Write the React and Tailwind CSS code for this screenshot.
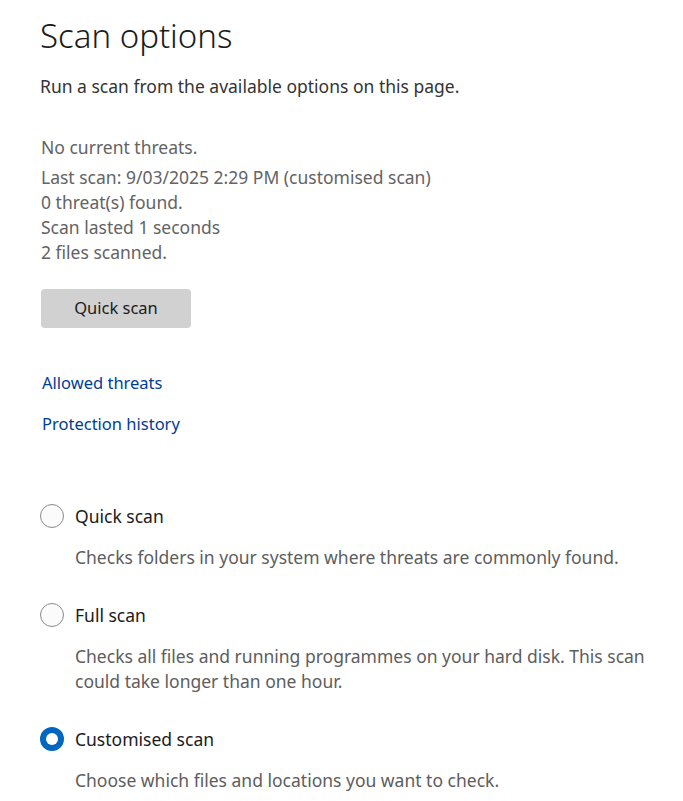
import { useState } from "react";

const statusLines = [
  "Last scan: 9/03/2025 2:29 PM (customised scan)",
  "0 threat(s) found.",
  "Scan lasted 1 seconds",
  "2 files scanned.",
];

const scanOptions = [
  {
    id: "quick",
    label: "Quick scan",
    description: "Checks folders in your system where threats are commonly found.",
  },
  {
    id: "full",
    label: "Full scan",
    description:
      "Checks all files and running programmes on your hard disk. This scan could take longer than one hour.",
  },
  {
    id: "custom",
    label: "Customised scan",
    description: "Choose which files and locations you want to check.",
  },
];

const Radio = ({ checked }) =>
  checked ? (
    <span className="w-6 h-6 rounded-full bg-[#0067c0] flex items-center justify-center shrink-0">
      <span className="w-3 h-3 rounded-full bg-white"></span>
    </span>
  ) : (
    <span className="w-6 h-6 rounded-full border border-[#8a8a8a] bg-[#fbfbfb] shrink-0"></span>
  );

export default function App() {
  const [selected, setSelected] = useState("custom");

  return (
    <div
      className="min-h-screen bg-white pl-10 pr-4 pt-[14px] text-[17.5px]"
      style={{ fontFamily: '"Noto Sans", "Open Sans", sans-serif' }}
    >
      <h1 className="text-[33px] font-light text-[#1b1b1b] leading-[44px]">Scan options</h1>
      <p className="mt-[16px] text-[#333333] leading-[24px]">
        Run a scan from the available options on this page.
      </p>

      <div className="mt-[37px] pl-[1px] text-[#636363]">
        <p className="leading-[25px] mb-[5px]">No current threats.</p>
        {statusLines.map((line) => (
          <p key={line} className="leading-[25px]">
            {line}
          </p>
        ))}
      </div>

      <button className="mt-[24px] ml-[1px] w-[150px] h-[39px] rounded-[4px] bg-[#d1d1d1] text-[#1b1b1b] text-[16.5px]">
        Quick scan
      </button>

      <div className="mt-[43px] ml-[2px] flex flex-col items-start gap-[17px] text-[#003e92] text-[16.5px]">
        <a href="#" className="leading-[24px]">Allowed threats</a>
        <a href="#" className="leading-[24px]">Protection history</a>
      </div>

      <div className="mt-[68px] flex flex-col gap-[33px]">
        {scanOptions.map((opt) => (
          <div key={opt.id}>
            <label
              className="flex items-center gap-[11px] cursor-pointer"
              onClick={() => setSelected(opt.id)}
            >
              <Radio checked={selected === opt.id} />
              <span className="text-[#1b1b1b] leading-[24px]">{opt.label}</span>
            </label>
            <p className="mt-[17px] ml-[35px] text-[#5d5d5d] leading-[25px] max-w-[590px]">
              {opt.description}
            </p>
          </div>
        ))}
      </div>
    </div>
  );
}
